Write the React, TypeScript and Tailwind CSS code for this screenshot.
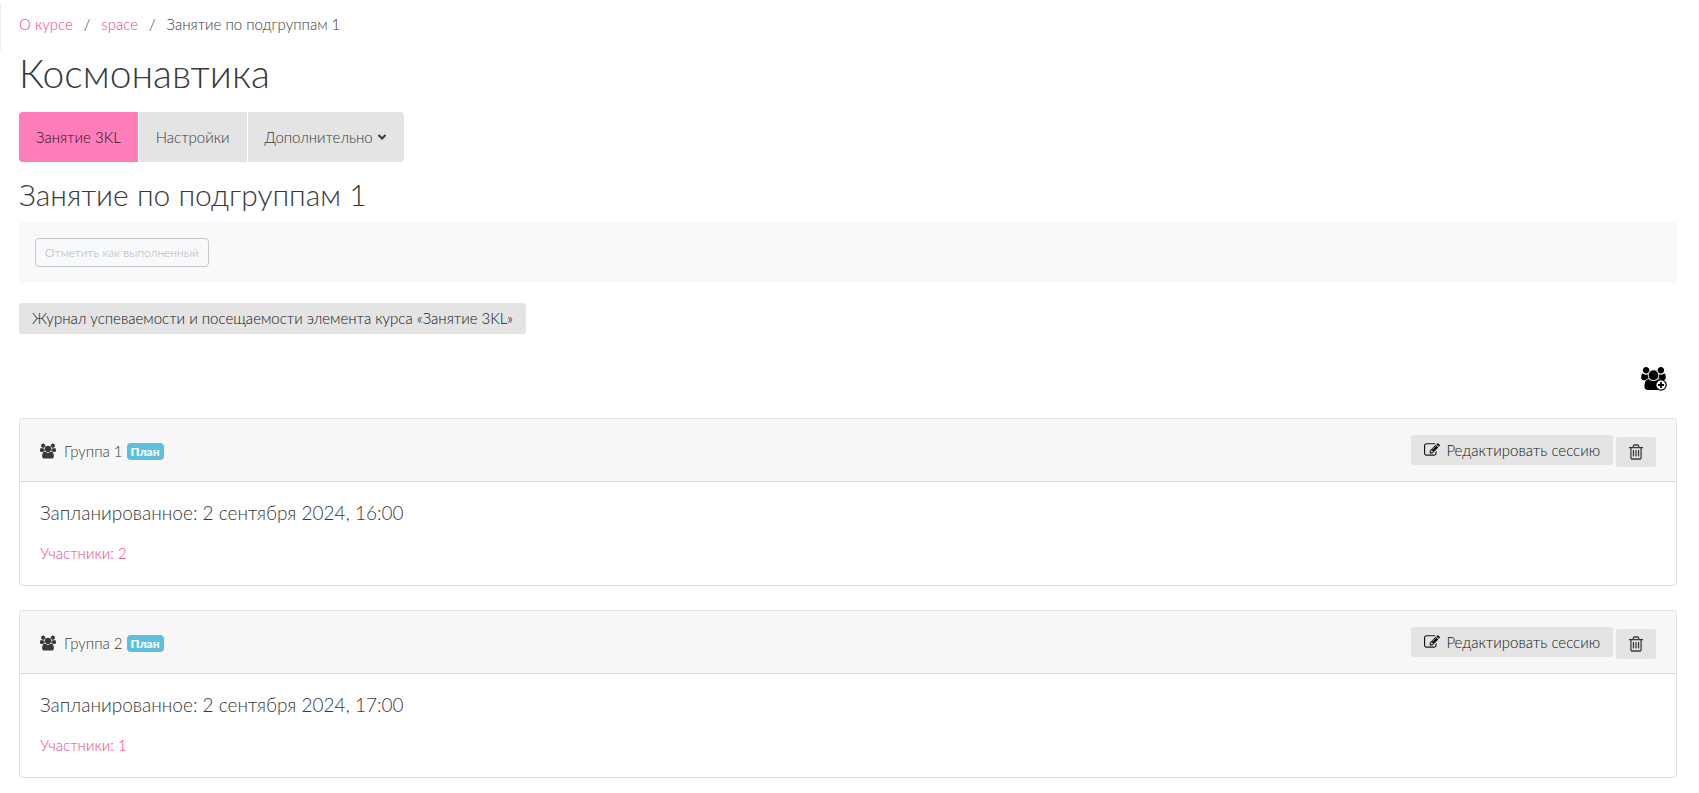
import { ReactNode } from 'react';
import clsx from 'clsx';

const breadcrumbs = [
  { name: 'О курсе', href: '#course' },
  { name: 'space', href: '#space' },
];

const sessions = [
  {
    id: 1,
    group: 'Группа 1',
    status: 'План',
    planned: '2 сентября 2024, 16:00',
    members: 2,
  },
  {
    id: 2,
    group: 'Группа 2',
    status: 'План',
    planned: '2 сентября 2024, 17:00',
    members: 1,
  },
];

const usersPath =
  'M529 896q-162 5-265 128h-134q-82 0-138-40.5t-56-118.5q0-353 124-353 6 0 43.5 21t97.5 42.5 119 21.5q67 0 133-23-5 37-5 66 0 139 81 256zm1071 637q0 120-73 189.5t-194 69.5h-874q-121 0-194-69.5t-73-189.5q0-53 3.5-103.5t14-109 26.5-108.5 43-97.5 62-81 85.5-53.5 111.5-20q10 0 43 21.5t73 48 107 48 135 21.5 135-21.5 107-48 73-48 43-21.5q61 0 111.5 20t85.5 53.5 62 81 43 97.5 26.5 108.5 14 109 3.5 103.5zm-1024-1277q0 106-75 181t-181 75-181-75-75-181 75-181 181-75 181 75 75 181zm704 384q0 159-112.5 271.5t-271.5 112.5-271.5-112.5-112.5-271.5 112.5-271.5 271.5-112.5 271.5 112.5 112.5 271.5zm576 225q0 78-56 118.5t-138 40.5h-134q-103-123-265-128 81-117 81-256 0-29-5-66 66 23 133 23 59 0 119-21.5t97.5-42.5 43.5-21q124 0 124 353zm-128-609q0 106-75 181t-181 75-181-75-75-181 75-181 181-75 181 75 75 181z';

function UsersIcon() {
  return (
    <svg viewBox="-64 0 1920 1792" className="h-4 w-4" aria-hidden="true">
      <path fill="currentColor" d={usersPath} />
    </svg>
  );
}

function AddGroupIcon() {
  return (
    <svg viewBox="0 0 26 25" className="h-[25px] w-[26px]" aria-hidden="true">
      <svg x="0" y="0" width="25" height="23" viewBox="-64 0 1920 1792">
        <path fill="currentColor" d={usersPath} />
      </svg>
      <circle cx="20" cy="18" r="5.2" fill="white" stroke="black" strokeWidth="1.2" />
      <path d="M17 18h6M20 15v6" stroke="black" strokeWidth="1.8" />
    </svg>
  );
}

function EditIcon() {
  return (
    <svg viewBox="0 0 1792 1792" className="h-4 w-4" aria-hidden="true">
      <path
        fill="currentColor"
        d="M888 1184l116-116-152-152-116 116v56h96v96h56zm440-720q-16-16-33 1l-350 350q-17 17-1 33t33-1l350-350q17-17 1-33zm80 594v190q0 119-84.5 203.5t-203.5 84.5h-832q-119 0-203.5-84.5t-84.5-203.5v-832q0-119 84.5-203.5t203.5-84.5h832q63 0 117 25 15 7 18 23 3 17-9 29l-49 49q-14 14-32 8-23-6-45-6h-832q-66 0-113 47t-47 113v832q0 66 47 113t113 47h832q66 0 113-47t47-113v-126q0-13 9-22l64-64q15-15 35-7t20 29zm-96-738l288 288-672 672h-288v-288zm444 132l-92 92-288-288 92-92q28-28 68-28t68 28l152 152q28 28 28 68t-28 68z"
      />
    </svg>
  );
}

function TrashIcon() {
  return (
    <svg viewBox="192 128 1408 1536" className="h-4 w-[14px]" aria-hidden="true">
      <path
        fill="currentColor"
        d="M704 736v576q0 14-9 23t-23 9h-64q-14 0-23-9t-9-23v-576q0-14 9-23t23-9h64q14 0 23 9t9 23zm256 0v576q0 14-9 23t-23 9h-64q-14 0-23-9t-9-23v-576q0-14 9-23t23-9h64q14 0 23 9t9 23zm256 0v576q0 14-9 23t-23 9h-64q-14 0-23-9t-9-23v-576q0-14 9-23t23-9h64q14 0 23 9t9 23zm128 724v-948h-896v948q0 22 7 40.5t14.5 27 10.5 8.5h832q3 0 10.5-8.5t14.5-27 7-40.5zm-672-1076h448l-48-117q-7-9-17-11h-317q-10 2-17 11zm928 32v64q0 14-9 23t-23 9h-96v948q0 83-47 143.5t-113 60.5h-832q-66 0-113-58.5t-47-141.5v-952h-96q-14 0-23-9t-9-23v-64q0-14 9-23t23-9h309l70-167q15-37 54-63t79-26h320q40 0 79 26t54 63l70 167h309q14 0 23 9t9 23z"
      />
    </svg>
  );
}

function Tab({ active, children }: { active?: boolean; children: ReactNode }) {
  return (
    <a
      href="#tab"
      aria-current={active ? 'page' : undefined}
      className={clsx(
        'flex h-[50px] items-center gap-1 px-[17px]',
        active ? 'bg-[#ff7eb9] text-[#2a0f1c]' : 'bg-[#e4e4e4] text-[#373a3c]'
      )}
    >
      {children}
    </a>
  );
}

function SessionCard({ session }: { session: (typeof sessions)[number] }) {
  return (
    <section className="overflow-hidden rounded border border-[#dfdfdf]">
      <header className="flex h-[63px] items-center justify-between border-b border-[#d9d9d9] bg-[#f7f7f7] px-5">
        <div className="flex items-center gap-1 pt-[2px]">
          <span className="mr-1 text-[#373a3c]">
            <UsersIcon />
          </span>
          <span>{session.group}</span>
          <span className="rounded bg-[#5bc0de] px-1 text-xs leading-[17px] font-black text-white">
            {session.status}
          </span>
        </div>
        <div className="flex items-end gap-[3px] pt-[2px] text-[#111417]">
          <button
            type="button"
            className="mb-[2px] flex h-[30px] items-center gap-[6px] rounded-[3px] bg-[#e4e4e4] px-[13px]"
          >
            <EditIcon />
            Редактировать сессию
          </button>
          <button
            type="button"
            aria-label="Удалить"
            className="flex h-[30px] w-10 items-center justify-center rounded-[3px] bg-[#e4e4e4] text-[#373a3c]"
          >
            <TrashIcon />
          </button>
        </div>
      </header>
      <div className="px-5 pt-[19px] pb-5">
        <p className="text-[19px] leading-6">Запланированное: {session.planned}</p>
        <a href="#members" className="mt-4 block leading-6 text-[#ee3f90]">
          Участники: {session.members}
        </a>
      </div>
    </section>
  );
}

export default function App() {
  return (
    <div className="flex items-start bg-white font-['Lato','Open_Sans',sans-serif] text-[15px] font-light text-[#373a3c]">
      <div className="mt-1 h-[46px] w-px bg-[#e9ecef]" />
      <main className="min-w-0 grow pr-[22px] pl-[18px]">
        <nav aria-label="Навигация" className="flex gap-[11px] pt-3 leading-6">
          {breadcrumbs.map((item) => (
            <span key={item.name} className="flex gap-[11px]">
              <a href={item.href} className="text-[#ee3f90]">
                {item.name}
              </a>
              <span>/</span>
            </span>
          ))}
          <span>Занятие по подгруппам 1</span>
        </nav>

        <h1 className="mt-[14px] text-[39px] leading-[46px]">Космонавтика</h1>

        <nav aria-label="Разделы" className="mt-4 flex">
          <div className="flex gap-px overflow-hidden rounded">
            <Tab active>Занятие 3KL</Tab>
            <Tab>Настройки</Tab>
            <Tab>
              Дополнительно
              <svg viewBox="0 0 10 8" className="h-2 w-[10px]" aria-hidden="true">
                <path d="M1.5 2l3.5 3.5L8.5 2" fill="none" stroke="#373a3c" strokeWidth="2" />
              </svg>
            </Tab>
          </div>
        </nav>

        <h2 className="mt-[14px] text-[30px] leading-9">Занятие по подгруппам 1</h2>

        <div className="mt-[10px] flex rounded bg-[#f8f9fb] p-4">
          <button
            type="button"
            disabled
            className="h-[29px] rounded border border-[#c5c7c9] px-[9px] text-xs text-[#b0b3b6]"
          >
            Отметить как выполненный
          </button>
        </div>

        <button
          type="button"
          className="mt-5 block h-[31px] rounded-[3px] bg-[#e4e4e4] px-[13px] text-[#111417]"
        >
          Журнал успеваемости и посещаемости элемента курса «Занятие 3KL»
        </button>

        <div className="mt-[33px] flex justify-end pr-[10px]">
          <button type="button" aria-label="Добавить группу" className="text-black">
            <AddGroupIcon />
          </button>
        </div>

        <div className="mt-[26px] flex flex-col gap-6">
          {sessions.map((session) => (
            <SessionCard key={session.id} session={session} />
          ))}
        </div>
      </main>
    </div>
  );
}
